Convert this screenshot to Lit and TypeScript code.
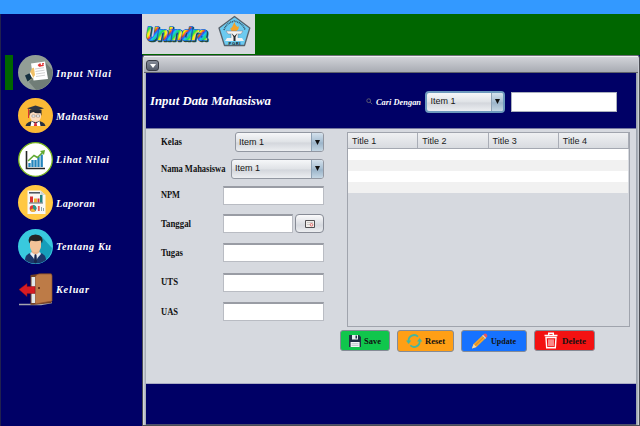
import { LitElement, html, svg, css } from "lit";
import { customElement, property } from "lit/decorators.js";

const icons: Record<string, unknown> = {
  nilai: svg`<circle cx="17.5" cy="17.5" r="17.5" fill="#929e96"/>
    <path d="M28 8 34.3 15A17.5 17.5 0 0 1 18 35L11 27Z" fill="#707d77"/>
    <path d="M13 8.5 27 6.5 30 24 15.5 25.5Z" fill="#fff"/>
    <path d="M20 10.5l2-1.5 1 2.5m-2.300-.5 5-.6M24 9l2-.3" stroke="#e03434" stroke-width="1.300" fill="none"/>
    <path d="M17 14l9-1.300M17.500 16.500l9-1.300M18 19l9-1.300M18 21.500l9-1.300" stroke="#bbb" stroke-width=".7"/>
    <path d="M12 18c1-4 3-6 4-5l1 7-2 3-3 2Z" fill="#f1c168"/>
    <path d="M7 20.500 12 18l2.500 5-5 3.500Z" fill="#153040"/><path d="m11.500 18 1.200-.5 2.500 5-1.200.6Z" fill="#fff"/>`,
  mahasiswa: svg`<circle cx="17.5" cy="17.500" r="17.500" fill="#fbb936"/>
    <path d="M7.500 28q1-5 10-5.500 9 .5 10 5.500Z" fill="#273040"/>
    <path d="m13.500 23 4 3 4-3 1 5h-10Z" fill="#fff"/><path d="m16.500 25 1-1 1 1 .7 3h-3.400Z" fill="#d9343d"/>
    <path d="M12 13h11v6q-1 5-5.500 5T12 19Z" fill="#fbdcc1"/>
    <path d="M11.500 18v-6h12v6l-1-3q-5 1-7-1l-3 1Z" fill="#1e2531"/>
    <path d="M14 17h3v2h-3Zm4.500 0h3v2h-3Z" fill="#fff" stroke="#555" stroke-width=".4"/>
    <path d="m9 10.300 8.500-2.800 8.500 2.800-8.500 3Z" fill="#303642"/><path d="M12 12h11v2.500q-5-2-11 0Z" fill="#272c36"/>
    <path d="M10.500 11v9" stroke="#d33" stroke-width="1"/>`,
  lihat: svg`<circle cx="17.5" cy="17.500" r="16.800" fill="#fff" stroke="#79b51c" stroke-width="1.300"/>
    <path d="M8.500 9v17.500H27" stroke="#252525" stroke-width="1.600" fill="none"/>
    <path d="M11.500 25v-4M14.500 25v-7M17.500 25v-7M20.500 25v-10M23.700 25V12.500" stroke="#2585bd" stroke-width="2.300"/>
    <path d="m10 19 6-5.500 3.500 2 6-6" stroke="#62a932" stroke-width="1.500" fill="none"/><path d="m22 9 5-1-1 5Z" fill="#62a932"/>`,
  laporan: svg`<circle cx="17.5" cy="17.500" r="17.500" fill="#ffc843"/>
    <path d="M9.500 5.500h13l5 4.500v19h-18Z" fill="#f8f8f5"/><path d="M22.500 5.500V10h5Z" fill="#d0d4d2"/>
    <path d="M11 7.800h11" stroke="#46505a" stroke-width="1.500"/>
    <path d="M12 17.500v-6h3v6Zm7.500 0v-4h2v4Z" fill="#d83232"/><path d="M16 17.500v-4h3v4Z" fill="#eeb530"/><path d="M22 17.500V10h2.500v7.500Z" fill="#22837e"/>
    <path d="M11 18h14" stroke="#33434b" stroke-width=".8"/>
    <circle cx="15" cy="23.500" r="3.300" fill="#db3b37"/><path d="M15 23.500V20a3.500 3.500 0 0 1 3.500 3.500l-1 2.500Z" fill="#28978c"/><path d="m15 23.500-3 1.500a3.500 3.500 0 0 0 5.500 1Z" fill="#eebc39"/>
    <path d="M20.800 26v-5" stroke="#e65d50" stroke-width="1.800"/><path d="M23.500 26v-4M25.500 26v-3" stroke="#8ba2a5"/>`,
  tentang: svg`<circle cx="17.5" cy="17.500" r="17.500" fill="#39c9de"/>
    <path d="m24 8 10 11a17.500 17.500 0 0 1-12 15l-9-11Z" fill="#159eba"/>
    <path d="M7 31q0-6 7-7.500h7q7 1.500 7 7.500a17.500 17.500 0 0 1-21 0Z" fill="#1c376b"/>
    <path d="M13.500 20h8v4l-4 4-4-4Z" fill="#ebb48b"/><path d="m13 23 4.500 3 4.500-3 1 2-3.500 4-2 5-2-5-3.500-4Z" fill="#e9eef4"/>
    <path d="m16.500 26 1-1 1 1 .6 7-1.600 1.500-1.600-1.500Z" fill="#17254b"/>
    <path d="M12 11h11v7q-1 5-5.500 5T12 18Z" fill="#f3c298"/>
    <path d="M11.200 14.500q-2.500-8.500 6.300-9 9 .5 6.500 9l-1.300-3q-5 1.500-9.800 0Z" fill="#252424"/>`,
  keluar: svg`<path d="M1 32.500h22l11-2" fill="none" stroke="#a5a5ad" stroke-width="1.300"/>
    <path d="M12.500 3 23 1.500h10.500v29.500l-18 1.800h-3Z" fill="#704025"/><path d="M13.500 5h5v26h-5Z" fill="#e1e8ea"/>
    <path d="M17.500 4.500Q18 2.500 21 2h11.500q1.500 0 1.500 2v25l-16.500 3Z" fill="#bd7b47" stroke="#8c502d" stroke-width=".7"/>
    <path d="m1 17.500 8-6v3h8v7H9v3Z" fill="#d61b23" stroke="#8c1218" stroke-width=".5"/><circle cx="21" cy="16" r="1" fill="#531f13"/>`,
  save: svg`<path d="M1 1h10l2 2v10H1Z" fill="#203044"/><path d="M4 1h6v4.500H4Z" fill="#e9f0f2"/><path d="M7.500 1.600h1.500v3H7.500Z" fill="#203044"/><path d="M2.600 8h9v5h-9Z" fill="#f4f6f7"/><path d="M3.500 9.700h7m-7 1.700h7" stroke="#9cabb2" stroke-width=".6"/>`,
  reset: svg`<path d="M2.600 8A5.600 5.600 0 0 1 12 3.600M13.700 8A5.600 5.600 0 0 1 4.300 12.400" stroke="#45b6a0" stroke-width="1.800" fill="none"/><path d="m0 7.500 2.600 3.500L5.300 7.500Zm11 1 2.700-3.500 2.600 3.500Z" fill="#45b6a0"/>`,
  update: svg`<path d="m1 15.500 1.500-4.500L12 2l3 3-9.500 9Z" fill="#f1a52e"/><path d="m3.800 12.700 9.600-9.300" stroke="#c9772b" stroke-width=".8"/><path d="m12 2 1.400-1.300q1.300-.6 2.300.5t.5 2.500L15 5Z" fill="#e9575e"/><path d="m11.200 2.700.9-.9 3.100 3.100-.9.9Z" fill="#ced4d8"/><path d="m1 15.500 1.500-4.500 3 3Z" fill="#f5d9ab"/>`,
  trash: svg`<path d="M.5 3.500h13M4.700 3.300V1.200h4.600v2.100M2 5.500h10l-.7 10.300H2.700Z" fill="none" stroke="#fff" stroke-width="1.400"/><path d="M5 7.300v6.900m2-6.900v6.900m2-6.900v6.900" stroke="#fff" stroke-width="1"/>`,
};

@customElement("combo-box")
class ComboBox extends LitElement {
  @property() value = "Item 1";
  static styles = css`
    :host { display: flex; box-sizing: border-box; border: 1px solid #9297a1; border-radius: 3px; overflow: hidden;
      background: linear-gradient(#f6f7f9, #dfe2e6 50%, #d3d6dc 55%, #eceef1); font: 9px/1 "Liberation Sans", sans-serif; color: #151515; }
    .value { flex: 1; align-self: center; padding-left: 3px; }
    .arrow { width: 11px; display: grid; place-items: center; border-left: 1px solid #8fa3b6;
      background: linear-gradient(#d4e1ec, #a5bdd1 50%, #9bb4c9 55%, #c5d7e4); }
  `;
  render() {
    return html`<span class="value">${this.value}</span>
      <span class="arrow"><svg width="5" height="5" viewBox="0 0 5 5"><path d="M0 0h5L2.500 5Z" fill="#111"/></svg></span>`;
  }
}

@customElement("app-root")
class AppRoot extends LitElement {
  static styles = css`
    * { box-sizing: border-box; }
    :host { display: flex; flex-direction: column; width: 640px; height: 426px; overflow: hidden; background: #000066; font-family: "Liberation Serif", serif; }
    svg { display: block; flex: none; overflow: visible; }
    .top { height: 14px; flex: none; background: #3399ff; }
    .body { flex: 1; display: flex; min-height: 0; }
    .side { width: 142px; border-left: 1px solid #20204e; padding: 41px 0 0 4px; display: flex; flex-direction: column; gap: 8.400px; }
    .item { display: flex; align-items: center; height: 35px; }
    .mark { width: 8px; height: 35px; margin-right: 5px; }
    .mark.on { background: #006600; }
    .item .text { margin-left: 3px; }
    .main { width: 498px; display: flex; flex-direction: column; }
    .brand { height: 41px; display: flex; background: #006600; }
    .logos { width: 113px; height: 40px; background: #d6d9df; }
    .frame { flex: 1; border: 1px solid #4b4d54; border-top: 1px solid #6c6e75; border-radius: 3px 3px 0 0; background: linear-gradient(90deg, #dde0e5, #9da4ae 3px, #9da4ae 494px, #d7dae0);
      padding: 0 3px; display: flex; flex-direction: column; }
    .title { height: 17px; flex: none; margin: 0 -2px; padding: 3px 0 0 2px; border-top: 1px solid #f0f1f3; background: linear-gradient(#d1d3d8, #a8abb3); border-bottom: 1px solid #60636b; }
    .menu { width: 13px; height: 11px; border: 1px solid #393c46; border-radius: 3px; background: linear-gradient(#858b98, #555c6b); display: grid; place-items: center; }
    .head { height: 56px; flex: none; background: #000066; display: flex; align-items: center; padding: 2px 19px 0 4px; color: #fff; border-bottom: 1px solid #7678a0; }
    .head h1 { margin: 0; width: 216px; }
    .cari { width: 50px; margin-left: 3px; }
    .head combo-box { width: 80px; height: 22px; border: 2px solid #6d99bc; border-radius: 4px; }
    .query { width: 106px; height: 20px; margin-left: 6px; background: #fff; border: 1px solid #aab0bd; }
    .content { height: 255px; flex: none; background: #d6d9df; display: flex; padding-left: 15px; border-bottom: 1px solid #aaacc4; }
    .form { width: 163px; display: flex; flex-direction: column; }
    .row { display: flex; flex: none; align-items: center; justify-content: space-between; height: 29.300px; }
    .row.select { height: 26.500px; }
    .row.npm { height: 26px; margin-bottom: 1px; }
    .kelas { width: 89px; height: 20px; } .nama { width: 93px; height: 20px; }
    .field { width: 101px; height: 19px; background: #fff; border: 1px solid #b9bcc3; border-top: 2px solid #999ca4; }
    .date { display: flex; gap: 2px; } .date .field { width: 70px; }
    .pick { width: 29px; height: 19px; border: 1px solid #878b95; border-radius: 4px; background: linear-gradient(#fbfbfc, #d6d9df 60%, #eceef0); display: grid; place-items: center; }
    .right { margin-left: 16px; padding-top: 3px; }
    .table { margin-left: 7px; width: 283px; height: 195px; border: 1px solid #a0a4ad; font: 9px/16px "Liberation Sans", sans-serif; color: #1a1a1a; }
    .cols { display: grid; grid-template-columns: repeat(4, 1fr); height: 16px; background: linear-gradient(#eff0f2, #d8dbe0); border-bottom: 1px solid #a4a8b1; }
    .cols span { padding-left: 4px; border-right: 1px solid #a9adb6; height: 15px; }
    .line { height: 11px; width: 280px; background: #fff; } .line.alt { background: #f1f1f1; }
    .acts { display: flex; gap: 7px; margin-top: 3px; align-items: flex-start; }
    .btn { height: 21px; display: flex; align-items: center; border: 1px solid #858b96; border-radius: 3px; }
    .save { width: 50px; padding-left: 7px; gap: 2px; background: #10c64c; }
    .reset { width: 57px; height: 22px; padding-left: 8px; gap: 3px; background: #ff9f15; }
    .update { width: 66px; height: 22px; padding-left: 9px; gap: 3px; background: #1672ff; }
    .delete { width: 61px; padding-left: 9px; gap: 4px; background: #f31212; }
    .foot { flex: 1; background: #000066; border-bottom: 1px solid #4d506d; }
  `;

  /* Text run with a fixed advance, so labels keep their column widths. */
  label(text: string, width: number, size: number, color: string, italic = false) {
    return svg`<svg width=${width + 2} height="14" viewBox="0 0 ${width + 2} 14"><text x="0" y="10" textLength=${width} lengthAdjust="spacingAndGlyphs" font-family="Liberation Serif, serif" font-size=${size} font-weight="bold" font-style=${italic ? "italic" : "normal"} fill=${color}>${text}</text></svg>`;
  }

  icon(name: string, w: number, h: number) {
    return html`<svg width=${w} height=${h} viewBox="0 0 ${w} ${h}">${icons[name]}</svg>`;
  }

  item(icon: string, text: string, width: number, on = false) {
    return html`<div class="item"><span class="mark ${on ? "on" : ""}"></span>${this.icon(icon, 35, 35)}
      <span class="text"><svg width="60" height="14" viewBox="0 0 60 14"><text x="0" y="10.500" textLength=${width} font-family="Liberation Serif, serif" font-size="10.200" font-weight="bold" font-style="italic" fill="#fff">${text}</text></svg></span></div>`;
  }

  field(text: string, width: number, cls = "") {
    return html`<div class="row ${cls}">${this.label(text, width, 9.3, "#111")}<span class="field"></span></div>`;
  }

  render() {
    return html`
      <div class="top"></div>
      <div class="body">
        <nav class="side">
          ${this.item("nilai", "Input Nilai", 55, true)}
          ${this.item("mahasiswa", "Mahasiswa", 52)}
          ${this.item("lihat", "Lihat Nilai", 53)}
          ${this.item("laporan", "Laporan", 39)}
          ${this.item("tentang", "Tentang Ku", 55)}
          ${this.item("keluar", "Keluar", 33)}
        </nav>
        <div class="main">
          <div class="brand"><div class="logos">
            <svg width="113" height="40" viewBox="0 0 113 40">
              <defs><linearGradient id="rainbow" x1="0" y1="0" x2="9" y2="8" gradientUnits="userSpaceOnUse" spreadMethod="repeat">
                <stop offset="0" stop-color="#16c8f0"/><stop offset=".25" stop-color="#20e050"/><stop offset=".45" stop-color="#fff010"/><stop offset=".6" stop-color="#fff010"/><stop offset=".75" stop-color="#ff4a18"/><stop offset=".88" stop-color="#285cff"/><stop offset="1" stop-color="#16c8f0"/></linearGradient></defs>
              <g font-family="Liberation Sans, sans-serif" font-size="17.500" font-weight="bold" font-style="italic" stroke-linejoin="round">
                <text x="5" y="27" textLength="61" lengthAdjust="spacingAndGlyphs" fill="#20483c" stroke="#20483c" stroke-width="2.500">Unindra</text>
                <text x="4" y="26.300" textLength="61" lengthAdjust="spacingAndGlyphs" fill="#1668e8" stroke="#1668e8" stroke-width="2">Unindra</text>
                <text x="4" y="26.300" textLength="61" lengthAdjust="spacingAndGlyphs" fill="url(#rainbow)" stroke="url(#rainbow)" stroke-width=".7">Unindra</text>
              </g>
              <path d="M92.500 2.500 107.800 14 102.500 31.500h-20L77 14Z" fill="#6ccaf0" stroke="#56616b" stroke-width="1.300" stroke-linejoin="round"/>
              <path d="M82 16q2-7 10.500-9 8.500 2 10.500 9" fill="none" stroke="#355365" stroke-width="1.500" stroke-dasharray="1 .7"/>
              <path d="M88 14q2 1 3-3l1.500-3 1 3 2 2 1-1q1 3-2 5h-5Z" fill="#f2a32a"/>
              <path d="M84 17h17l-2 3h-3v6h-7v-6h-3Z" fill="#f4f4f2" stroke="#778" stroke-width=".5"/>
              <path d="M85 24h15l2 3H83Z" fill="#f3f3f3"/><path d="m89.500 19 3 3 3-3-2 4v4h-2v-4Z" fill="#26292c"/>
              <text x="86.500" y="31" textLength="12" font-family="Liberation Sans, sans-serif" font-size="4.200" font-weight="bold" fill="#111">PGRI</text>
            </svg>
          </div></div>
          <div class="frame">
            <div class="title"><div class="menu"><svg width="6" height="4" viewBox="0 0 6 4"><path d="M0 0h6L3 4Z" fill="#fff"/></svg></div></div>
            <div class="head">
              <h1>${this.label("Input Data Mahasiswa", 121, 12.5, "#fff", true)}</h1>
              <svg width="7" height="7" viewBox="0 0 7 7"><circle cx="2.700" cy="2.700" r="1.900" fill="none" stroke="#5b5b72"/><path d="m4.200 4.200 2 2" stroke="#5b5b72"/></svg>
              <span class="cari">${this.label("Cari Dengan", 45, 9, "#fff", true)}</span>
              <combo-box></combo-box><span class="query"></span>
            </div>
            <div class="content">
              <div class="form">
                <div class="row select">${this.label("Kelas", 21, 9.3, "#111")}<combo-box class="kelas"></combo-box></div>
                <div class="row select">${this.label("Nama Mahasiswa", 64.5, 9.3, "#111")}<combo-box class="nama"></combo-box></div>
                ${this.field("NPM", 19, "npm")}
                <div class="row">${this.label("Tanggal", 30, 9.3, "#111")}
                  <span class="date"><span class="field"></span><span class="pick">
                    <svg width="10" height="8" viewBox="0 0 10 8"><path d="M.5.5h9v7h-9Z" fill="#f1eeea" stroke="#504f52"/><path d="M2 2.500h6M2 4.500h3" stroke="#b4b4b4" stroke-width=".6"/><circle cx="6.500" cy="4.800" r="1.300" fill="none" stroke="#df5555" stroke-width=".8"/></svg>
                  </span></span></div>
                ${this.field("Tugas", 22)}
                ${this.field("UTS", 17)}
                ${this.field("UAS", 17)}
              </div>
              <div class="right">
                <div class="table">
                  <div class="cols"><span>Title 1</span><span>Title 2</span><span>Title 3</span><span>Title 4</span></div>
                  <div class="line"></div><div class="line alt"></div><div class="line"></div><div class="line alt"></div>
                </div>
                <div class="acts">
                  <div class="btn save">${this.icon("save", 14, 14)}${this.label("Save", 17, 8.8, "#111")}</div>
                  <div class="btn reset">${this.icon("reset", 16, 16)}${this.label("Reset", 20, 8.8, "#111")}</div>
                  <div class="btn update">${this.icon("update", 17, 17)}${this.label("Update", 25, 8.8, "#111")}</div>
                  <div class="btn delete">${this.icon("trash", 14, 17)}${this.label("Delete", 24, 8.8, "#111")}</div>
                </div>
              </div>
            </div>
            <div class="foot"></div>
          </div>
        </div>
      </div>`;
  }
}
